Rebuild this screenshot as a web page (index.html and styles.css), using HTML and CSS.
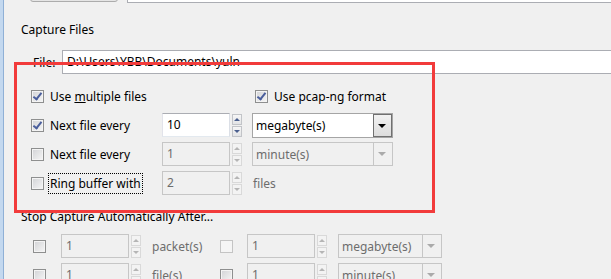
FILE: index.html
```html
<!DOCTYPE html>
<html lang="en">
<head>
  <meta charset="UTF-8" />
  <meta name="viewport" content="width=device-width, initial-scale=1.0"/>
  <title>Capture Options</title>
  <link rel="stylesheet" href="styles.css">
</head>
<body>
  <div class="window">
    <div class="edge"></div>
    <div class="content">

      <!-- row cut off at the top of the shot -->
      <div class="top-row">
        <div class="btn"></div>
        <div class="field wide"></div>
      </div>

      <div class="title">Capture Files</div>

      <div class="file-row">
        <span class="file-label">File:</span>
        <div class="field wide path">D:\Users\YBB\Documents\yuln</div>
      </div>

      <div class="capture-grid">
        <label class="check">
          <span class="box checked"></span>
          <span class="txt">Use <u>m</u>ultiple files</span>
        </label>
        <label class="check col3 inset">
          <span class="box checked"></span>
          <span class="txt">Use pcap-ng format</span>
        </label>

        <label class="check">
          <span class="box checked"></span>
          <span class="txt">Next file every</span>
        </label>
        <div class="spin">
          <div class="field num">10</div>
          <div class="arrows"><span class="up"></span><span class="down"></span></div>
        </div>
        <div class="combo">
          <span class="val">megabyte(s)</span>
          <span class="drop"></span>
        </div>

        <label class="check">
          <span class="box"></span>
          <span class="txt">Next file every</span>
        </label>
        <div class="spin off">
          <div class="field num">1</div>
          <div class="arrows"><span class="up"></span><span class="down"></span></div>
        </div>
        <div class="combo off">
          <span class="val">minute(s)</span>
          <span class="drop"></span>
        </div>

        <label class="check">
          <span class="box"></span>
          <span class="txt focus">Ring buffer with</span>
        </label>
        <div class="spin off">
          <div class="field num">2</div>
          <div class="arrows"><span class="up"></span><span class="down"></span></div>
        </div>
        <span class="unit files">files</span>
      </div>

      <div class="title stop">Stop Capture Automatically After...</div>

      <div class="stop-grid">
        <span class="box"></span>
        <div class="spin off">
          <div class="field num">1</div>
          <div class="arrows"><span class="up"></span><span class="down"></span></div>
        </div>
        <span class="unit">packet(s)</span>
        <span class="box plain"></span>
        <div class="spin off">
          <div class="field num">1</div>
          <div class="arrows"><span class="up"></span><span class="down"></span></div>
        </div>
        <div class="combo off">
          <span class="val">megabyte(s)</span>
          <span class="drop"></span>
        </div>

        <span class="box"></span>
        <div class="spin off">
          <div class="field num">1</div>
          <div class="arrows"><span class="up"></span><span class="down"></span></div>
        </div>
        <span class="unit">file(s)</span>
        <span class="box"></span>
        <div class="spin off">
          <div class="field num">1</div>
          <div class="arrows"><span class="up"></span><span class="down"></span></div>
        </div>
        <div class="combo off">
          <span class="val">minute(s)</span>
          <span class="drop"></span>
        </div>
      </div>
    </div>
  </div>

  <!-- red highlight drawn over the screenshot -->
  <div class="highlight"></div>
</body>
</html>
```

FILE: styles.css
```css
html, body {
  margin: 0;
  padding: 0;
  height: 279px;
  overflow: hidden;
  background: #f0f0f0;
  color: #000;
  font-family: "Noto Sans", "Open Sans", sans-serif;
  font-size: 12px;
}

* {
  box-sizing: border-box;
}

.window {
  display: flex;
  height: 279px;
}

.edge {
  width: 4px;
  flex: none;
  background: #c3d8ef;
  border-right: 1px solid #8fb0d6;
}

.content {
  flex: 1;
  min-width: 0;
}

.field {
  background: #fff;
  border: 1px solid #abadb3;
  border-color: #abadb3 #dbdfe6 #e3e9ef #e2e3ea;
}

.top-row {
  display: flex;
  height: 23px;
  margin-top: -20px;
}

.btn {
  width: 88px;
  height: 22px;
  margin-left: 26px;
  border: 1px solid #acacac;
  border-radius: 3px;
  background: #e5e5e5;
}

.field.wide {
  flex: 1;
  margin-left: 9px;
  margin-right: -10px;
  border-color: #abadb3;
}

.title {
  margin: 19px 0 0 17px;
  line-height: 16px;
}

.file-row {
  display: flex;
  align-items: center;
  margin-top: 12px;
  height: 24px;
}

.file-label {
  width: 29px;
  margin-left: 29px;
}

.field.path {
  margin-left: 0;
  height: 24px;
  line-height: 22px;
  padding-left: 4px;
}

.capture-grid {
  display: grid;
  grid-template-columns: 131px 90px 141px;
  grid-auto-rows: 24px;
  row-gap: 5px;
  margin-top: 10px;
  padding-left: 27px;
  align-items: center;
}

.col3 {
  grid-column: 3;
}

.inset {
  padding-left: 3px;
}

.check {
  display: flex;
  align-items: center;
  gap: 4px;
}

.txt {
  padding: 1px;
  border: 1px solid transparent;
  line-height: 17px;
  white-space: nowrap;
}

.txt.focus {
  border: 1px dotted #000;
}

.box {
  width: 13px;
  height: 13px;
  flex: none;
  border: 1px solid #8e8f8f;
  box-shadow: inset 0 0 0 1px #f4f4f4;
  background: linear-gradient(135deg, #d2d3d6, #f6f6f6);
  position: relative;
}

.box.plain {
  border-color: #c4c4c4;
  box-shadow: none;
  background: #f5f5f5;
}

.box.checked::after {
  content: "";
  position: absolute;
  left: 3px;
  top: 0px;
  width: 3px;
  height: 7px;
  border: solid #4a5e9c;
  border-width: 0 2px 2px 0;
  transform: rotate(38deg);
}

.spin {
  display: flex;
  align-items: center;
  height: 24px;
}

.field.num {
  width: 68px;
  height: 24px;
  line-height: 22px;
  padding-left: 4px;
}

.arrows {
  display: flex;
  flex-direction: column;
  gap: 1px;
  margin-left: 2px;
}

.arrows span {
  width: 10px;
  height: 11px;
  border: 1px solid #c2c4c8;
  background: linear-gradient(#f6f6f6, #e3e4e6);
  position: relative;
}

.arrows span::after {
  content: "";
  position: absolute;
  left: 1px;
  top: 3px;
  border-left: 3px solid transparent;
  border-right: 3px solid transparent;
}

.arrows .up::after {
  border-bottom: 3px solid #4a5f8e;
}

.arrows .down::after {
  border-top: 3px solid #4a5f8e;
}

.combo {
  display: flex;
  align-items: center;
  height: 25px;
  width: 141px;
  background: #fff;
  border: 1px solid #a5a5a5;
}

.combo .val {
  flex: 1;
  padding-left: 3px;
}

.combo .drop {
  width: 19px;
  height: 23px;
  border: 1px solid #707070;
  background: linear-gradient(#f2f2f2, #dcdcdc);
  position: relative;
}

.combo .drop::after {
  content: "";
  position: absolute;
  left: 4px;
  top: 9px;
  border-left: 4px solid transparent;
  border-right: 4px solid transparent;
  border-top: 4px solid #000;
}

.off .field,
.off.combo {
  background: #f0f0f0;
  border: 1px solid #c6c6c6;
  color: #6d6d6d;
}

.off .arrows span {
  border-color: #d9d9d9;
  background: #f3f3f3;
}

.off .arrows .up::after {
  border-bottom-color: #b5b5b5;
}

.off .arrows .down::after {
  border-top-color: #b5b5b5;
}

.off.combo {
  height: 24px;
}

.off.combo .drop {
  height: 22px;
  border: none;
  border-left: 1px solid #c6c6c6;
  background: #f0f0f0;
}

.off.combo .drop::after {
  border-top-color: #aaa;
}

.unit {
  color: #6d6d6d;
}

.unit.files {
  padding-left: 1px;
}

.title.stop {
  margin-top: 14px;
}

.stop-grid {
  display: grid;
  grid-template-columns: 28px 91px 68px 27px 91px 104px;
  grid-auto-rows: 24px;
  row-gap: 5px;
  margin-top: 9px;
  padding-left: 29px;
  align-items: center;
}

.stop-grid .combo {
  width: 104px;
}

.highlight {
  position: absolute;
  left: 14px;
  top: 62px;
  width: 421px;
  height: 151px;
  border: 3px solid #f23b3b;
}
```
